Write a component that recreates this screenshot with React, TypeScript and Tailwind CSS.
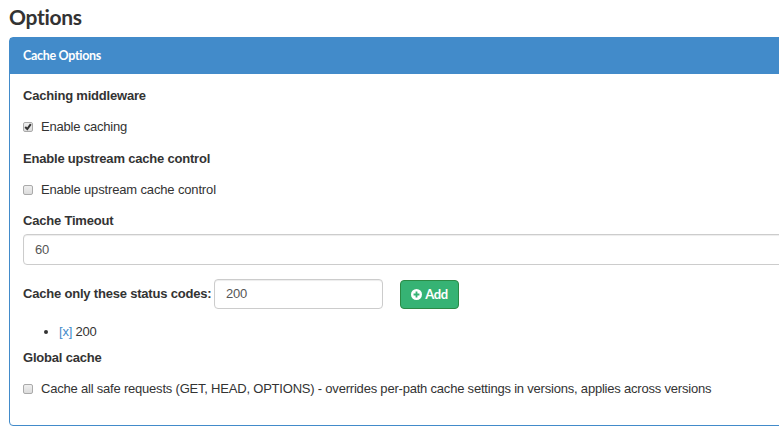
import type { ReactNode } from 'react';

function Label({ children, className = '' }: { children: ReactNode; className?: string }) {
  return (
    <div className={`flex h-5 items-center whitespace-nowrap font-bold ${className}`}>
      <span>{children}</span>
    </div>
  );
}

function Check({ label, checked = false, className = '' }: { label: string; checked?: boolean; className?: string }) {
  return (
    <label className={`flex h-5 items-center gap-2 whitespace-nowrap ${className}`}>
      <span className="flex h-[10px] w-[10px] shrink-0 items-center justify-center rounded-[2px] border border-[#aaa] bg-gradient-to-b from-[#efefef] to-[#dcdcdc]">
        {checked && (
          <svg viewBox="0 0 10 10" className="h-[10px] w-[10px] shrink-0" fill="none" stroke="#333" strokeWidth="2">
            <path d="M2.2 5 L4.3 7 L7.8 2.2" />
          </svg>
        )}
      </span>
      <span>{label}</span>
    </label>
  );
}

export default function App() {
  return (
    <div className="h-[438px] w-[779px] overflow-hidden bg-white pl-[9px] font-['Liberation_Sans',Arial,sans-serif] text-[13px] leading-5 tracking-[-0.2px] text-[#333]">
      <h1 className="flex h-[37px] items-center pb-1 font-['Lato',sans-serif] text-[21px] font-bold leading-6 tracking-[-0.3px] [font-variant-ligatures:none]">
        <span>Options</span>
      </h1>
      <section className="h-[389px] w-[800px] rounded border border-[#428bca]">
        <header className="flex h-9 items-center bg-[#428bca] pb-px pl-[13px] font-['Lato',sans-serif] text-[12.5px] font-bold tracking-[-0.3px] text-white [font-variant-ligatures:none]">
          <span>Cache Options</span>
        </header>
        <div className="pl-[13px]">
          <Label className="mt-3">Caching middleware</Label>
          <Check className="mt-[11px]" label="Enable caching" checked />
          <Label className="mt-3">Enable upstream cache control</Label>
          <Check className="mt-[11px] tracking-[-0.15px]" label="Enable upstream cache control" />
          <Label className="mt-[11px]">Cache Timeout</Label>
          <div className="mt-[3px] flex h-[31px] items-center rounded border border-[#ccc] pl-[11px] text-[#555] shadow-[inset_0_1px_1px_rgba(0,0,0,0.075)]">
            60
          </div>
          <div className="mt-[14px] flex h-[30px] items-center">
            <Label className="w-[191px]">Cache only these status codes:</Label>
            <div className="flex h-[30px] w-[169px] items-center rounded border border-[#ccc] pl-[11px] text-[#555] shadow-[inset_0_1px_1px_rgba(0,0,0,0.075)]">
              200
            </div>
            <button className="ml-[17px] mt-px flex h-[29px] w-[59px] items-center justify-center gap-[3px] rounded border border-[#2b8a45] bg-[#36b374] pb-px font-['Lato',sans-serif] text-[13px] font-bold tracking-[-0.4px] text-white">
              <svg viewBox="0 0 12 12" className="h-[11px] w-[11px]">
                <circle cx="6" cy="6" r="6" fill="#fff" />
                <path d="M6 2.8v6.4M2.8 6h6.4" stroke="#36b374" strokeWidth="2" />
              </svg>
              <span>Add</span>
            </button>
          </div>
          <div className="mt-[13px] flex h-5 items-center pl-[21px]">
            <span className="mr-[11px] h-1 w-1 rounded-full bg-[#333]" />
            <span><a className="text-[#428bca]">[x]</a> 200</span>
          </div>
          <Label className="mt-[6px]">Global cache</Label>
          <Check
            className="mt-[11px] tracking-[-0.206px]"
            label="Cache all safe requests (GET, HEAD, OPTIONS) - overrides per-path cache settings in versions, applies across versions"
          />
        </div>
      </section>
    </div>
  );
}
